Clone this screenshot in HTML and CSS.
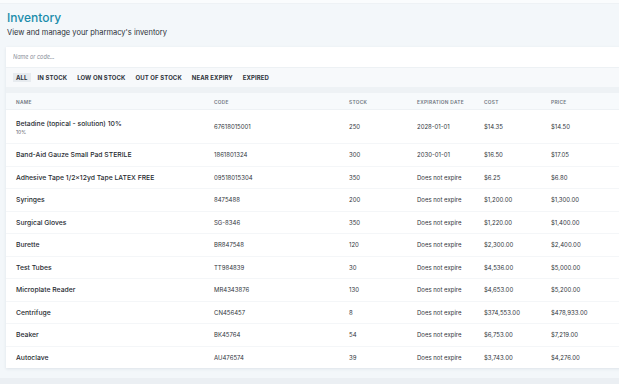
FILE: index.html
```html
<!DOCTYPE html>
<html lang="en">

<head>
    <meta charset="UTF-8">
    <meta name="viewport" content="width=device-width, initial-scale=1.0">
    <title>Inventory</title>
    <link rel="stylesheet" href="styles.css">
</head>

<body>
    <div class="topbar"></div>
    <main class="page">
        <h1 class="title">Inventory</h1>
        <p class="subtitle">View and manage your pharmacy's inventory</p>

        <section class="card">
            <div class="search">
                <input type="text" class="search-input" placeholder="Name or code...">
            </div>
            <ul class="tabs">
                <li class="tab active">ALL</li>
                <li class="tab">IN STOCK</li>
                <li class="tab">LOW ON STOCK</li>
                <li class="tab">OUT OF STOCK</li>
                <li class="tab">NEAR EXPIRY</li>
                <li class="tab">EXPIRED</li>
            </ul>

            <table class="grid">
                <colgroup>
                    <col class="c-name">
                    <col class="c-code">
                    <col class="c-stock">
                    <col class="c-exp">
                    <col class="c-cost">
                    <col class="c-price">
                    <col>
                </colgroup>
                <thead>
                    <tr>
                        <th>Name</th>
                        <th>Code</th>
                        <th>Stock</th>
                        <th>Expiration Date</th>
                        <th>Cost</th>
                        <th>Price</th>
                        <th></th>
                    </tr>
                </thead>
                <tbody>
                    <tr class="tall">
                        <td class="name">Betadine (topical - solution) 10%<span class="sub">10%</span></td>
                        <td>67618015001</td>
                        <td>250</td>
                        <td>2028-01-01</td>
                        <td>$14.35</td>
                        <td>$14.50</td>
                        <td></td>
                    </tr>
                    <tr>
                        <td class="name">Band-Aid Gauze Small Pad STERILE</td>
                        <td>1861801324</td>
                        <td>300</td>
                        <td>2030-01-01</td>
                        <td>$16.50</td>
                        <td>$17.05</td>
                        <td></td>
                    </tr>
                    <tr>
                        <td class="name">Adhesive Tape 1/2×12yd Tape LATEX FREE</td>
                        <td>09518015304</td>
                        <td>350</td>
                        <td>Does not expire</td>
                        <td>$6.25</td>
                        <td>$6.80</td>
                        <td></td>
                    </tr>
                    <tr>
                        <td class="name">Syringes</td>
                        <td>8475488</td>
                        <td>200</td>
                        <td>Does not expire</td>
                        <td>$1,200.00</td>
                        <td>$1,300.00</td>
                        <td></td>
                    </tr>
                    <tr>
                        <td class="name">Surgical Gloves</td>
                        <td>SG-8346</td>
                        <td>350</td>
                        <td>Does not expire</td>
                        <td>$1,220.00</td>
                        <td>$1,400.00</td>
                        <td></td>
                    </tr>
                    <tr>
                        <td class="name">Burette</td>
                        <td>BR847548</td>
                        <td>120</td>
                        <td>Does not expire</td>
                        <td>$2,300.00</td>
                        <td>$2,400.00</td>
                        <td></td>
                    </tr>
                    <tr>
                        <td class="name">Test Tubes</td>
                        <td>TT984839</td>
                        <td>30</td>
                        <td>Does not expire</td>
                        <td>$4,536.00</td>
                        <td>$5,000.00</td>
                        <td></td>
                    </tr>
                    <tr>
                        <td class="name">Microplate Reader</td>
                        <td>MR4343876</td>
                        <td>130</td>
                        <td>Does not expire</td>
                        <td>$4,653.00</td>
                        <td>$5,200.00</td>
                        <td></td>
                    </tr>
                    <tr>
                        <td class="name">Centrifuge</td>
                        <td>CN456457</td>
                        <td>8</td>
                        <td>Does not expire</td>
                        <td>$374,553.00</td>
                        <td>$478,933.00</td>
                        <td></td>
                    </tr>
                    <tr>
                        <td class="name">Beaker</td>
                        <td>BK45764</td>
                        <td>54</td>
                        <td>Does not expire</td>
                        <td>$6,753.00</td>
                        <td>$7,219.00</td>
                        <td></td>
                    </tr>
                    <tr>
                        <td class="name">Autoclave</td>
                        <td>AU476574</td>
                        <td>39</td>
                        <td>Does not expire</td>
                        <td>$3,743.00</td>
                        <td>$4,276.00</td>
                        <td></td>
                    </tr>
                </tbody>
            </table>
        </section>
    </main>
    <div class="footer"></div>
</body>

</html>
```

FILE: styles.css
```css
html,
body {
    margin: 0;
    padding: 0;
}

body {
    width: 619px;
    height: 384px;
    overflow: hidden;
    background: #f3f7fa;
    font-family: Inter, "Noto Sans", sans-serif;
    color: #2b3038;
}

ul {
    margin: 0;
    padding: 0;
    list-style: none;
}

.topbar {
    height: 3px;
    background: #fafcfd;
    border-bottom: 1px solid #eef2f5;
}

.page {
    padding: 0 0 0 6px;
    width: 660px;
}

.title {
    margin: 6px 0 0 1px;
    font-size: 12px;
    line-height: 16px;
    font-weight: 500;
    color: #1a8cab;
}

.subtitle {
    margin: 2px 0 0 1px;
    font-size: 7.5px;
    line-height: 10px;
    color: #2b3038;
}

.card {
    margin-top: 9px;
    width: 660px;
    background: #fff;
    box-shadow: 0 1px 3px rgba(40, 60, 80, 0.1);
}

.search {
    height: 20px;
    display: flex;
    align-items: center;
    border-bottom: 1px solid #edf1f4;
}

.search-input {
    border: none;
    outline: none;
    padding: 0 0 0 7px;
    font: italic 5.5px Inter, sans-serif;
    color: #777;
    background: transparent;
    width: 300px;
}

.search-input::placeholder {
    color: #8a9099;
}

.tabs {
    display: flex;
    align-items: center;
    gap: 4px;
    height: 19px;
    padding: 0 0 0 7px;
    background: #f7f9fb;
    border-bottom: 6px solid #eef2f5;
}

.tab {
    font-size: 6px;
    font-weight: 700;
    letter-spacing: 0.1px;
    line-height: 9px;
    padding: 0 3px;
    color: #2f343b;
}

.tab.active {
    background: #e7ebef;
}

.grid {
    width: 100%;
    border-collapse: collapse;
    table-layout: fixed;
}

.c-name {
    width: 198px;
}

.c-code {
    width: 135px;
}

.c-stock {
    width: 68px;
}

.c-exp {
    width: 67px;
}

.c-cost {
    width: 67px;
}

.c-price {
    width: 67px;
}

.grid th {
    height: 14px;
    padding: 2px 0 0 10px;
    text-align: left;
    font-size: 4.8px;
    font-weight: 600;
    letter-spacing: 0.3px;
    text-transform: uppercase;
    color: #6f7680;
    background: #f7fafc;
    border-bottom: 1px solid #eef2f5;
}

.grid td {
    height: 21.5px;
    padding: 0 0 0 10px;
    font-size: 6px;
    color: #30353c;
    border-bottom: 1px solid #f4f6f8;
    white-space: nowrap;
}

.grid td.name {
    font-size: 6.8px;
    font-weight: 500;
    color: #272b31;
}

.grid tr.tall td {
    height: 33px;
}

.sub {
    display: block;
    margin-top: 1px;
    font-size: 5px;
    font-weight: 400;
    color: #5b616a;
}

.grid tr:last-child td {
    border-bottom: none;
}

.footer {
    margin-top: 10px;
    height: 10px;
    background: #ebeff3;
}
```
